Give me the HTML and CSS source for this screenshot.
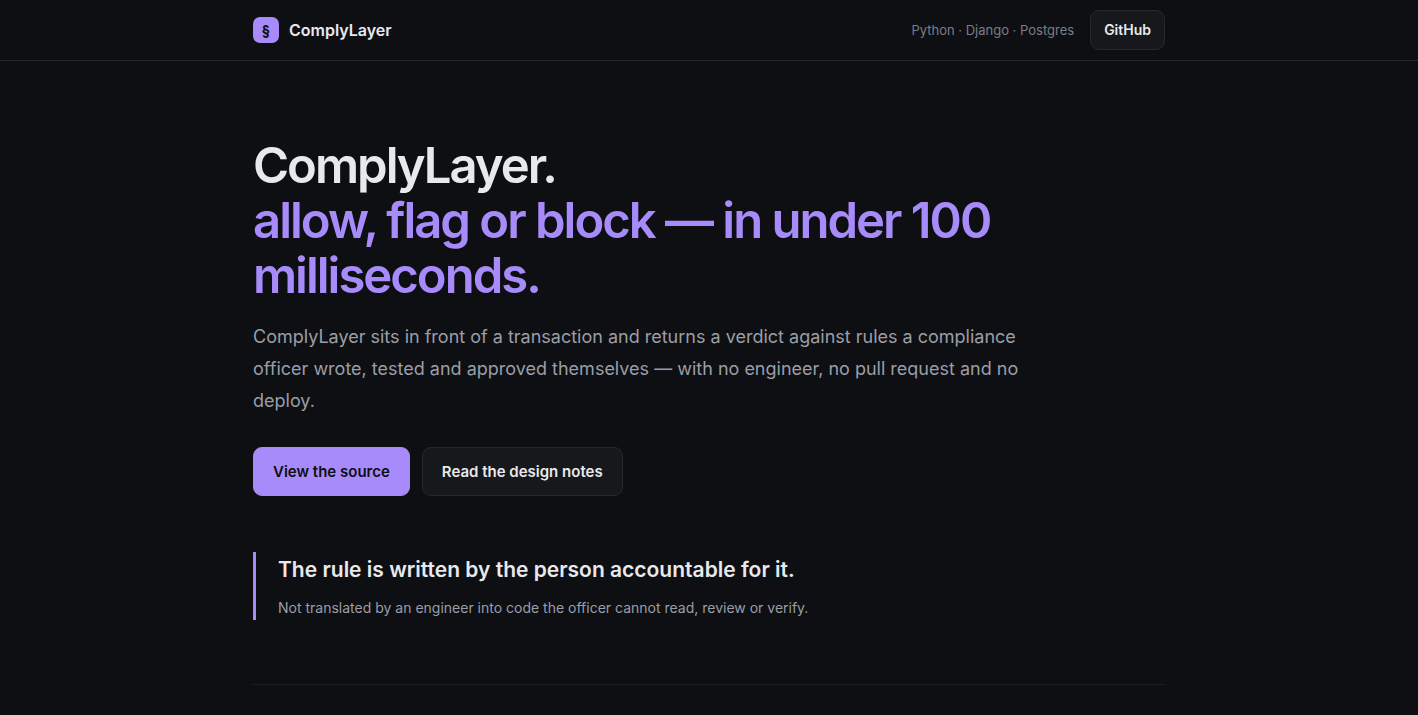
FILE: index.html
```html
<!DOCTYPE html>
<html lang="en">
<head>
<meta charset="utf-8">
<meta name="viewport" content="width=device-width, initial-scale=1">
<title>ComplyLayer</title>
<link rel="stylesheet" href="styles.css">
</head>
<body>
<header class="site-header">
  <div class="wrap bar">
    <a class="brand" href="#"><span class="mark">§</span>ComplyLayer</a>
    <nav class="nav">
      <span class="stack">Python · Django · Postgres</span>
      <a class="button button-small" href="#">GitHub</a>
    </nav>
  </div>
</header>
<main class="wrap">
  <section class="hero">
    <h1>ComplyLayer.<br><span class="accent">allow, flag or block — in under 100 milliseconds.</span></h1>
    <p class="lede">ComplyLayer sits in front of a transaction and returns a verdict against rules a compliance officer wrote, tested and approved themselves — with no engineer, no pull request and no deploy.</p>
    <div class="actions">
      <a class="button button-primary" href="#">View the source</a>
      <a class="button" href="#">Read the design notes</a>
    </div>
    <div class="callout">
      <p class="callout-title">The rule is written by the person accountable for it.</p>
      <p class="callout-text">Not translated by an engineer into code the officer cannot read, review or verify.</p>
    </div>
  </section>
</main>
</body>
</html>
```
FILE: styles.css
```css
* {
  box-sizing: border-box;
}

body {
  margin: 0;
  background: #0e0f12;
  color: #e8e9ed;
  font-family: Inter, "Liberation Sans", sans-serif;
  font-size: 16px;
}

h1,
p {
  margin: 0;
}

a {
  color: inherit;
  text-decoration: none;
}

.wrap {
  max-width: 960px;
  margin: 0 auto;
  padding: 0 24px;
}

.site-header {
  border-bottom: 1px solid #26282e;
}

.bar {
  display: flex;
  align-items: center;
  justify-content: space-between;
  padding-top: 10px;
  padding-bottom: 10px;
}

.brand {
  display: flex;
  align-items: center;
  gap: 10px;
  font-weight: 600;
}

.mark {
  display: grid;
  place-items: center;
  width: 26px;
  height: 26px;
  border-radius: 7px;
  background: #a78bfa;
  color: #0e0f12;
  font-size: 14px;
  font-weight: 700;
}

.nav {
  display: flex;
  align-items: center;
  gap: 16px;
}

.stack {
  color: #7a7e88;
  font-size: 13px;
}

.button {
  padding: 12px 19px;
  border: 1px solid #26282e;
  border-radius: 9px;
  background: #16181c;
  font-size: 15px;
  font-weight: 600;
  line-height: 23px;
}

.button-small {
  padding: 8px 13px;
  font-size: 14px;
  line-height: 22px;
}

.button-primary {
  border-color: #a78bfa;
  background: #a78bfa;
  color: #0e0f12;
}

.hero {
  padding: 77px 0 64px;
  border-bottom: 1px solid #1e2025;
}

h1 {
  font-size: 49px;
  font-weight: 600;
  line-height: 55px;
  letter-spacing: -2px;
}

.accent {
  color: #a78bfa;
}

.lede {
  max-width: 780px;
  margin-top: 18px;
  color: #9a9ea8;
  font-size: 18px;
  line-height: 32px;
}

.actions {
  display: flex;
  flex-wrap: wrap;
  gap: 12px;
  margin-top: 30px;
}

.callout {
  margin-top: 56px;
  padding: 0 0 0 22px;
  border-left: 3px solid #a78bfa;
}

.callout-title {
  font-size: 21px;
  font-weight: 600;
  line-height: 36px;
}

.callout-text {
  margin-top: 8px;
  color: #9a9ea8;
  font-size: 14px;
  line-height: 24px;
}
```
